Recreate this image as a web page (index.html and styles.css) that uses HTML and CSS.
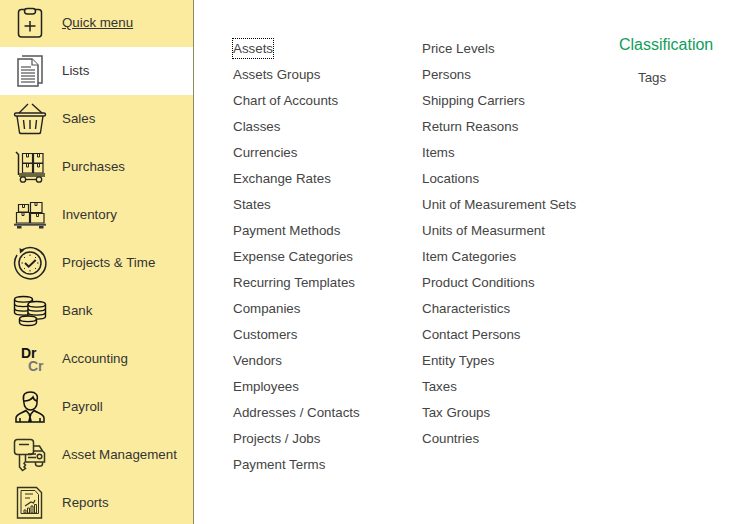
FILE: index.html
```html
<!DOCTYPE html>
<html lang="en">
<head>
<meta charset="utf-8">
<title>Lists</title>
<link rel="stylesheet" href="styles.css">
</head>
<body>
<div class="app">
<nav class="sidebar">
  <a class="nav-item first"><span class="icon"><svg viewBox="0 0 48 48" class="ico"><rect x="18.500" y="9.500" width="23" height="27.500" rx="3" fill="none" stroke="#222" stroke-width="1.500"/><rect x="24.500" y="8.500" width="11" height="5.500" rx="2.700" fill="#fbeb9f" stroke="#222" stroke-width="1.500"/><path d="M30 21v10.500M24.500 26h11" stroke="#222" stroke-width="1.500"/></svg></span><span class="label quick">Quick menu</span></a>
  <a class="nav-item active"><span class="icon"><svg viewBox="0 0 48 48" class="ico"><path d="M22 9h20v27h-4" fill="none" stroke="#555" stroke-width="1.500"/><path d="M18 12h14l6 6v21H18z" fill="#fff" stroke="#555" stroke-width="1.500"/><path d="M32 12v6h6" fill="#fff" stroke="#555" stroke-width="1.200"/><path d="M21 20h10M21 23h14M21 26h14M21 29h14M21 32h14M21 35h14" stroke="#333" stroke-width="1.200"/></svg></span><span class="label">Lists</span></a>
  <a class="nav-item"><span class="icon"><svg viewBox="0 0 48 48" class="ico"><g fill="none" stroke="#222" stroke-width="1.400"><rect x="14.500" y="18" width="31" height="3" rx="1.500"/><path d="M17 21l2.500 16.500q.2 1 1.500 1h18q1.300 0 1.500-1L43 21"/><path d="M19 18l9-9M32 9l10 9M23.500 25l1 9M30 25v9M36.500 25l-1 9"/></g></svg></span><span class="label">Sales</span></a>
  <a class="nav-item"><span class="icon"><svg viewBox="0 0 48 48" class="ico"><path d="M16 9l2.500 2.500V32" fill="none" stroke="#222" stroke-width="1.500"/><path d="M22.500 10.500h10v9.500h-10zM33.500 10.500h9.500v9.500h-9.500zM22.500 20.500h10v9.500h-10zM33.500 20.500h9.500v9.500h-9.500z" fill="none" stroke="#222" stroke-width="1.200"/><path d="M26.500 11v3h2v-3M37.500 11v3h2v-3M26.500 21v3h2v-3M37.500 21v3h2v-3" fill="none" stroke="#222" stroke-width="1"/><rect x="19" y="30" width="26" height="4" fill="#6b6540"/><path d="M21 36.500h20" stroke="#222" stroke-width="1.300"/><circle cx="23" cy="36.500" r="2.700" fill="#fbeb9f" stroke="#222" stroke-width="1.300"/><circle cx="39" cy="36.500" r="2.700" fill="#fbeb9f" stroke="#222" stroke-width="1.300"/></svg></span><span class="label">Purchases</span></a>
  <a class="nav-item"><span class="icon"><svg viewBox="0 0 48 48" class="ico"><path d="M18.500 13.500h10v7.500h-10zM30.500 11.500h11.500v10H30.500zM16.500 21.500h13v10.500h-13zM30.500 22.500h13.500v9.500H30.500z" fill="none" stroke="#222" stroke-width="1.200"/><path d="M22.500 14v2.500h2V14M35 12v2.500h2V12M22 22v2.500h2V22M36.500 23v2.500h2V23" fill="none" stroke="#222" stroke-width="1"/><path d="M14 33.700h32" stroke="#444" stroke-width="2"/><path d="M17 35h4.500v2.500H17zM39 35h4.500v2.500H39z" fill="#333"/></svg></span><span class="label">Inventory</span></a>
  <a class="nav-item"><span class="icon"><svg viewBox="0 0 48 48" class="ico"><path d="M22 11A15.600 15.600 0 1 1 17 16" fill="none" stroke="#222" stroke-width="1.500"/><circle cx="30" cy="24" r="11" fill="none" stroke="#222" stroke-width="1.500"/><path d="M25 24l3.700 3.700 7-6.700" fill="none" stroke="#222" stroke-width="2"/><path d="M19.500 9l4.500 2.500-4 3z" fill="#222"/><path d="M30 15.500v1.500M30 31v1.500M21.500 24H23M37 24h1.500M24 18l1 1M35 29l1 1M24 30l1-1M35 19l1-1" stroke="#222" stroke-width="1"/></svg></span><span class="label">Projects &amp; Time</span></a>
  <a class="nav-item"><span class="icon"><svg viewBox="0 0 48 48" class="ico"><g fill="#fbeb9f" stroke="#111" stroke-width="1.400"><path d="M14.500 12.500c0-4 18-4 18 0v13c0 3.500-18 3.500-18 0z"/><path d="M14.500 12.500c0 3.500 18 3.500 18 0M14.500 17c0 3.500 18 3.500 18 0M14.500 21.500c0 3.500 18 3.500 18 0" fill="none"/><path d="M28 17.500c0-4 17.500-4 17.500 0v12c0 3.500-17.500 3.500-17.500 0z"/><path d="M28 17.500c0 3.500 17.500 3.500 17.500 0M28 21.500c0 3.500 17.500 3.500 17.500 0M28 25.500c0 3.500 17.500 3.500 17.500 0" fill="none"/><path d="M19.500 32c0-4 17-4 17 0v3.500c0 4-17 4-17 0z"/><path d="M19.500 32c0 3.500 17 3.500 17 0" fill="none"/></g></svg></span><span class="label">Bank</span></a>
  <a class="nav-item"><span class="icon drcr"><span class="dr">Dr</span><span class="cr">Cr</span></span><span class="label">Accounting</span></a>
  <a class="nav-item"><span class="icon"><svg viewBox="0 0 48 48" class="ico"><g fill="none" stroke="#111" stroke-width="1.500"><path d="M23.500 17c-1-6 2-8 7-8s8 3 6.500 8v3c0 4-3 7-6.500 7s-6.500-3-6.500-7z"/><path d="M24 18c3 0 7-1 9-4 .5 2 2 3.500 4 4"/><path d="M16 39v-4c0-4 6-5 10-7.500l4 4.500 4-4.500c4 2.500 10 3.500 10 7.500v4zM20 39v-4M40 39v-4"/></g><path d="M28.500 32h3l-.7 2 1.200 5h-4l1.200-5z" fill="#111"/></svg></span><span class="label">Payroll</span></a>
  <a class="nav-item"><span class="icon"><svg viewBox="0 0 48 48" class="ico"><g fill="none" stroke="#332" stroke-width="1.500"><rect x="14.500" y="8.500" width="19" height="15" rx="3"/><path d="M19 13.500h10"/><path d="M19.500 24v12l3 3.500 3-2-1.500-1.500 1.500-2-1.500-1.500 1.500-2V24"/><path d="M33.500 15h6l3 5 2 2v9H26M28 23h8M28 26.500h8M33.500 20h9"/><circle cx="39.500" cy="25.500" r="2.300"/><path d="M35.500 31v2c0 3 7 3 7 0v-2"/></g></svg></span><span class="label">Asset Management</span></a>
  <a class="nav-item"><span class="icon"><svg viewBox="0 0 48 48" class="ico"><g fill="none" stroke="#332"><path d="M17.500 8.500h19l5 5v25.500h-24z" stroke-width="1.400"/><path d="M21 11.500h14l3.500 4v19H21z" stroke-width="1"/><path d="M25 15h8M25 19h5M25 27l6-4 2.500 1 1.500-3" stroke-width="1.200"/><path d="M24 31h2v3h-2zM27.500 29h2v5h-2zM31 27h2v7h-2zM34.500 25.500h2V34h-2z" stroke-width="1"/></g></svg></span><span class="label">Reports</span></a>
</nav>
<main class="content">
  <ul class="col col-a">
    <li><a class="focus">Assets</a></li><li>Assets Groups</li><li>Chart of Accounts</li><li>Classes</li><li>Currencies</li><li>Exchange Rates</li><li>States</li><li>Payment Methods</li><li>Expense Categories</li><li>Recurring Templates</li><li>Companies</li><li>Customers</li><li>Vendors</li><li>Employees</li><li>Addresses / Contacts</li><li>Projects / Jobs</li><li>Payment Terms</li>
  </ul>
  <ul class="col col-b">
    <li>Price Levels</li><li>Persons</li><li>Shipping Carriers</li><li>Return Reasons</li><li>Items</li><li>Locations</li><li>Unit of Measurement Sets</li><li>Units of Measurment</li><li>Item Categories</li><li>Product Conditions</li><li>Characteristics</li><li>Contact Persons</li><li>Entity Types</li><li>Taxes</li><li>Tax Groups</li><li>Countries</li>
  </ul>
  <section class="col-c">
    <h2 class="group-title">Classification</h2>
    <ul class="col sub"><li>Tags</li></ul>
  </section>
</main>
</div>
</body>
</html>
```

FILE: styles.css
```css
* { box-sizing: border-box; }
html, body { margin: 0; padding: 0; height: 100%; overflow: hidden; }
body { font-family: "Liberation Sans", Arial, sans-serif; font-size: 13.33px; color: #444; background: #fff; }
.app { display: flex; height: 524px; }
.sidebar { width: 194px; flex: none; background: #fbeb9f; border-right: 1px solid #8d8a62; overflow: hidden; }
.nav-item { display: flex; align-items: center; height: 48px; color: #333; }
.nav-item.first { height: 47px; }
.nav-item.active { background: #fff; }
.icon { width: 48px; height: 48px; flex: none; margin-right: 14px; }
.ico { display: block; width: 48px; height: 48px; }
.label { margin-bottom: 2px; }
.quick { text-decoration: underline; }
.drcr { position: relative; font-weight: 700; font-size: 14px; line-height: 11px; }
.dr { position: absolute; left: 21px; top: 13px; color: #111; }
.cr { position: absolute; left: 28px; top: 26px; color: #777; }
.content { display: flex; flex: 1; padding-top: 36px; padding-left: 39px; }
.col { list-style: none; margin: 0; padding: 0; }
.col li { height: 26px; line-height: 26px; white-space: nowrap; }
.col-a { width: 189px; }
.col-b { width: 197px; }
.focus { outline: 1px dotted #000; padding: 2px 0; }
.group-title { margin: 0 0 11px; font-size: 16px; font-weight: 400; line-height: 18px; color: #0f9d58; }
.sub { padding-left: 19px; }
```
